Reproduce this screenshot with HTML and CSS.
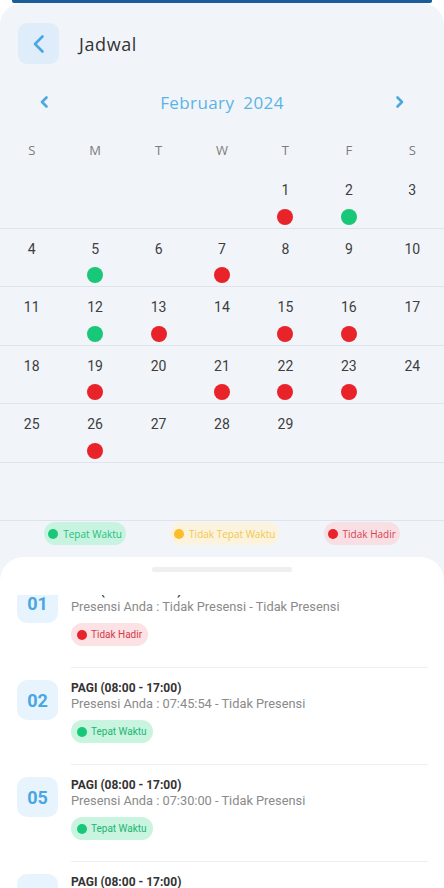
FILE: index.html
```html
<!DOCTYPE html>
<html lang="id">
<head>
<meta charset="utf-8">
<title>Jadwal</title>
<link rel="stylesheet" href="styles.css">
</head>
<body>
<div class="topbar"></div>
<div class="page">
  <header class="header">
    <button class="back" aria-label="Kembali">
      <svg width="24" height="24" viewBox="0 0 24 24"><path d="M15.5 4.5 L8 12 L15.5 19.5" fill="none" stroke="#4aa6e3" stroke-width="2.6" stroke-linecap="round" stroke-linejoin="round"/></svg>
    </button>
    <h1 class="title">Jadwal</h1>
  </header>

  <div class="monthnav">
    <svg class="nav-arrow" width="14" height="14" viewBox="0 0 14 14"><path d="M9.5 2.5 L5 7 L9.5 11.5" fill="none" stroke="#4aa8de" stroke-width="2.6" stroke-linecap="round" stroke-linejoin="round"/></svg>
    <div class="month"><span>February</span><span>2024</span></div>
    <svg class="nav-arrow" width="14" height="14" viewBox="0 0 14 14"><path d="M4.5 2.5 L9 7 L4.5 11.5" fill="none" stroke="#4aa8de" stroke-width="2.6" stroke-linecap="round" stroke-linejoin="round"/></svg>
  </div>

  <div class="weekdays">
    <span>S</span><span>M</span><span>T</span><span>W</span><span>T</span><span>F</span><span>S</span>
  </div>

  <div class="weeks">
    <div class="week">
      <div class="day"></div><div class="day"></div><div class="day"></div><div class="day"></div>
      <div class="day"><span class="num">1</span><i class="dot red"></i></div>
      <div class="day"><span class="num">2</span><i class="dot green"></i></div>
      <div class="day"><span class="num">3</span></div>
    </div>
    <div class="week">
      <div class="day"><span class="num">4</span></div>
      <div class="day"><span class="num">5</span><i class="dot green"></i></div>
      <div class="day"><span class="num">6</span></div>
      <div class="day"><span class="num">7</span><i class="dot red"></i></div>
      <div class="day"><span class="num">8</span></div>
      <div class="day"><span class="num">9</span></div>
      <div class="day"><span class="num">10</span></div>
    </div>
    <div class="week">
      <div class="day"><span class="num">11</span></div>
      <div class="day"><span class="num">12</span><i class="dot green"></i></div>
      <div class="day"><span class="num">13</span><i class="dot red"></i></div>
      <div class="day"><span class="num">14</span></div>
      <div class="day"><span class="num">15</span><i class="dot red"></i></div>
      <div class="day"><span class="num">16</span><i class="dot red"></i></div>
      <div class="day"><span class="num">17</span></div>
    </div>
    <div class="week">
      <div class="day"><span class="num">18</span></div>
      <div class="day"><span class="num">19</span><i class="dot red"></i></div>
      <div class="day"><span class="num">20</span></div>
      <div class="day"><span class="num">21</span><i class="dot red"></i></div>
      <div class="day"><span class="num">22</span><i class="dot red"></i></div>
      <div class="day"><span class="num">23</span><i class="dot red"></i></div>
      <div class="day"><span class="num">24</span></div>
    </div>
    <div class="week">
      <div class="day"><span class="num">25</span></div>
      <div class="day"><span class="num">26</span><i class="dot red"></i></div>
      <div class="day"><span class="num">27</span></div>
      <div class="day"><span class="num">28</span></div>
      <div class="day"><span class="num">29</span></div>
      <div class="day"></div>
      <div class="day"></div>
    </div>
    <div class="week">
      <div class="day"></div><div class="day"></div><div class="day"></div><div class="day"></div><div class="day"></div><div class="day"></div><div class="day"></div>
    </div>
  </div>

  <div class="legend">
    <span class="legend-chip ontime"><i></i>Tepat Waktu</span>
    <span class="legend-chip late"><i></i>Tidak Tepat Waktu</span>
    <span class="legend-chip absent"><i></i>Tidak Hadir</span>
  </div>

  <section class="sheet">
    <div class="handle"></div>
    <div class="viewport">
      <div class="list">
        <div class="item">
          <div class="badge">01</div>
          <div class="info">
            <div class="shift">PAGI (08:00 - 17:00)</div>
            <div class="presence">Presensi Anda : Tidak Presensi - Tidak Presensi</div>
            <span class="status absent"><i></i>Tidak Hadir</span>
          </div>
        </div>
        <div class="item">
          <div class="badge">02</div>
          <div class="info">
            <div class="shift">PAGI (08:00 - 17:00)</div>
            <div class="presence">Presensi Anda : 07:45:54 - Tidak Presensi</div>
            <span class="status ontime"><i></i>Tepat Waktu</span>
          </div>
        </div>
        <div class="item">
          <div class="badge">05</div>
          <div class="info">
            <div class="shift">PAGI (08:00 - 17:00)</div>
            <div class="presence">Presensi Anda : 07:30:00 - Tidak Presensi</div>
            <span class="status ontime"><i></i>Tepat Waktu</span>
          </div>
        </div>
        <div class="item">
          <div class="badge">07</div>
          <div class="info">
            <div class="shift">PAGI (08:00 - 17:00)</div>
            <div class="presence">Presensi Anda : Tidak Presensi - Tidak Presensi</div>
            <span class="status absent"><i></i>Tidak Hadir</span>
          </div>
        </div>
      </div>
    </div>
  </section>
</div>
</body>
</html>
```

FILE: styles.css
```css
* { box-sizing: border-box; }

html, body {
  margin: 0;
  padding: 0;
  background: #ffffff;
  height: 100%;
  overflow: hidden;
}

body {
  font-family: Roboto, "Liberation Sans", sans-serif;
  color: #333;
}

.topbar {
  height: 3px;
  margin: 0 12px;
  background: #1b5d98;
  border-radius: 0 0 2px 2px;
}

.page {
  height: calc(100vh - 3px);
  background: #f1f5fa;
  border-radius: 22px 22px 0 0;
  display: flex;
  flex-direction: column;
  overflow: hidden;
}

.header {
  display: flex;
  align-items: center;
  padding: 20px 18px 0;
  gap: 20px;
}

.back {
  width: 41px;
  height: 41px;
  border: 0;
  padding: 0;
  border-radius: 9px;
  background: #deedf9;
  display: flex;
  align-items: center;
  justify-content: center;
}

.title {
  margin: 0;
  font-family: "Open Sans", "Noto Sans", sans-serif;
  font-size: 18px;
  font-weight: 500;
  color: #333;
  letter-spacing: 0.6px;
}

.monthnav {
  margin-top: 26px;
  height: 24px;
  display: flex;
  align-items: center;
  justify-content: space-between;
  padding: 0 37px;
}

.month {
  display: flex;
  gap: 9px;
  font-family: "Open Sans", "Noto Sans", sans-serif;
  font-size: 17px;
  color: #5bb3e5;
  letter-spacing: 0.4px;
}

.weekdays {
  margin-top: 16px;
  height: 40px;
  display: grid;
  grid-template-columns: repeat(7, 1fr);
  align-items: center;
  text-align: center;
  font-family: "Open Sans", "Noto Sans", sans-serif;
  font-size: 13px;
  color: #7c7c7c;
}

.week {
  height: 58.5px;
  display: grid;
  grid-template-columns: repeat(7, 1fr);
  border-bottom: 1px solid #dfe4ea;
}

.day {
  display: flex;
  flex-direction: column;
  align-items: center;
  padding-top: 12px;
}

.num {
  font-size: 14px;
  line-height: 17px;
  color: #3d3d3d;
}

.dot {
  display: block;
  width: 16px;
  height: 16px;
  border-radius: 50%;
  margin-top: 9.5px;
}

.dot.red { background: #e8232a; }
.dot.green { background: #18c777; }

.legend {
  padding-top: 1px;
  display: flex;
  justify-content: space-evenly;
}

.legend-chip {
  height: 23px;
  display: inline-flex;
  align-items: center;
  gap: 5px;
  padding: 0 4px;
  border-radius: 12px;
  font-family: "Open Sans", "Noto Sans", sans-serif;
  font-size: 10px;
}

.legend-chip i {
  width: 10px;
  height: 10px;
  border-radius: 50%;
}

.legend-chip.ontime { background: #c8f3e0; color: #25bf7c; }
.legend-chip.ontime i { background: #18c777; }
.legend-chip.late { background: #fbf3dd; color: #f1c94f; }
.legend-chip.late i { background: #fbbd2a; }
.legend-chip.absent { background: #f8dfe4; color: #d8414f; }
.legend-chip.absent i { background: #e8232a; }

.sheet {
  margin-top: 12px;
  flex: 1;
  background: #ffffff;
  border-radius: 24px 24px 0 0;
  display: flex;
  flex-direction: column;
  min-height: 0;
}

.handle {
  margin: 10px auto 0;
  width: 140px;
  height: 5px;
  background: #efefef;
  border-radius: 2px;
}

.viewport {
  margin-top: 23px;
  flex: 1;
  overflow: hidden;
}

.list {
  margin-top: -24px;
}

.item {
  display: flex;
  align-items: flex-start;
  gap: 13px;
  padding: 0 16px 0 17px;
}

.badge {
  margin-top: 12px;
  width: 41px;
  height: 40px;
  flex: none;
  border-radius: 10px;
  background: #e8f4fd;
  color: #48a6e2;
  font-size: 18px;
  font-weight: 700;
  display: flex;
  align-items: center;
  justify-content: center;
}

.info {
  flex: 1;
  padding: 12px 0 21px;
  border-bottom: 1px solid #eeeeee;
}

.shift {
  font-size: 12px;
  line-height: 16px;
  font-weight: 700;
  color: #333;
}

.presence {
  font-size: 12.8px;
  line-height: 16px;
  color: #8a8a8a;
}

.status {
  margin-top: 8px;
  height: 23px;
  display: inline-flex;
  align-items: center;
  gap: 4px;
  padding: 0 6px;
  border-radius: 12px;
  font-size: 10px;
}

.status i {
  width: 10px;
  height: 10px;
  border-radius: 50%;
}

.status.ontime { background: #c9f4df; color: #22b472; }
.status.ontime i { background: #18c777; }
.status.absent { background: #fce1e5; color: #d43a48; }
.status.absent i { background: #e8232a; }
```
